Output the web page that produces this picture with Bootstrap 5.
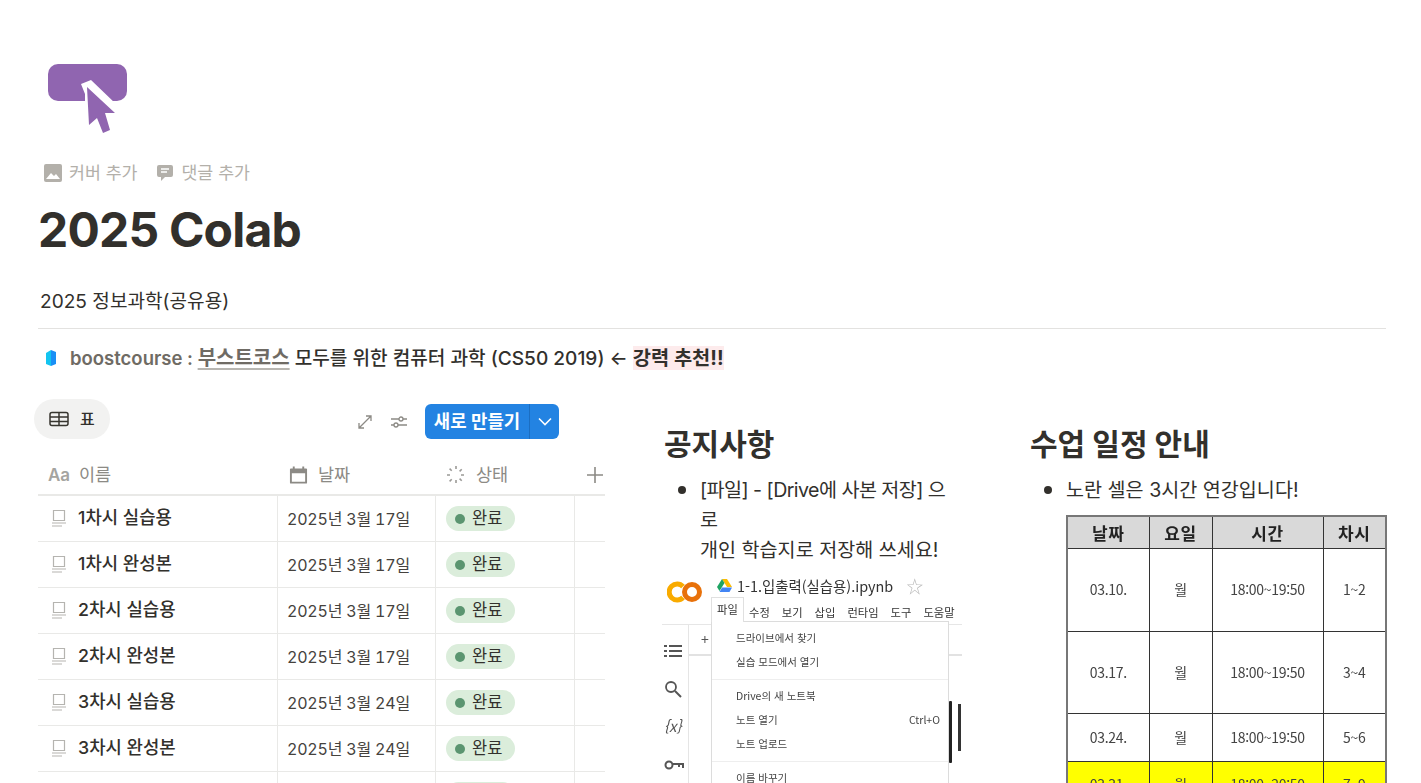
<!DOCTYPE html>
<html lang="ko">
  <head>
    <meta charset="UTF-8" />
    <meta name="viewport" content="width=device-width, initial-scale=1" />
    <title>2025 Colab</title>
    <link href="https://cdn.jsdelivr.net/npm/bootstrap@5.3.0/dist/css/bootstrap.min.css" rel="stylesheet" />
    <style>
      html, body { height: 783px; overflow: hidden; }
      body { font-family: Inter, "Noto Sans CJK KR", sans-serif; color: #32302c; background: #fff; font-size: 18px; }
      .page-wrap { padding: 64px 35px 0 38px; }
      .page-icon { display: block; margin-left: 10px; height: 69px; width: 80px; }
      .page-actions { margin-top: 28px; margin-left: 6px; height: 24px; color: #b3b0aa; font-size: 17.3px; gap: 19px; }
      .page-actions svg { margin-right: 7px; }
      .page-title { font-size: 48px; font-weight: 700; line-height: 58px; margin: 16px 0 0; color: #32302c; letter-spacing: -0.8px; }
      .page-sub { font-size: 19.1px; line-height: 28px; margin: 28px 0 0 2px; }
      .page-rule { border-top: 1px solid #e3e2e0; margin: 13px 0 0; }
      .link-line { font-size: 19.1px; font-weight: 500; line-height: 28px; margin-top: 15px; margin-left: 6px; height: 28px; white-space: nowrap; }
      .link-line svg { margin-right: 12px; }
      .link-src { color: #6f6b64; font-size: 18.5px; font-weight: 600; }
      .link-src u { font-size: 20px; text-decoration-color: #b8b6b1; text-underline-offset: 3px; }
      .hl-pink { background: #fdebec; font-size: 19.8px; font-weight: 700; }
      .cols { margin-top: 27px; }
      .db-col { width: 567px; flex: none; }
      .notice-col { width: 300px; margin-left: 59px; flex: none; }
      .plan-col { width: 357px; margin-left: 66px; flex: none; }
      .db-tab { margin-left: -4px; width: 76px; height: 40px; border-radius: 20px; background: #f2f2f1; font-size: 16px; font-weight: 500; gap: 11px; padding-left: 15px; }
      .db-tools { height: 40px; }
      .db-tools svg { margin-right: 17px; }
      .db-tools .db-tab svg, .new-btn svg { margin-right: 0; }
      .tool-set { margin-top: 5px; }
      .new-btn { width: 134px; height: 35px; background: #2383e2; border-radius: 6px; color: #fff; font-size: 17.8px; font-weight: 600; margin-right: 46px; }
      .new-main { width: 105px; text-align: center; line-height: 35px; border-right: 1px solid #1b6ec2; white-space: nowrap; }
      .new-caret { flex: 1; }
      .db-head { height: 40px; margin-top: 17px; color: #8c8a85; font-size: 17.5px; border-bottom: 2px solid #e9e9e7; }
      .db-row { height: 46px; border-bottom: 1px solid #e9e9e7; font-size: 16px; }
      .cell-name { width: 240px; flex: none; border-right: 1px solid #e9e9e7; padding-left: 13px; height: 100%; font-weight: 500; gap: 11px; font-size: 17.8px; }
      .cell-date { width: 158px; flex: none; border-right: 1px solid #e9e9e7; padding-left: 9px; height: 100%; color: #45423d; font-variant-numeric: tabular-nums; white-space: nowrap; letter-spacing: -0.2px; }
      .cell-status { width: 139px; flex: none; border-right: 1px solid #e9e9e7; padding-left: 10px; height: 100%; }
      .head-name { width: 240px; flex: none; padding-left: 10px; gap: 9px; }
      .head-date { width: 158px; flex: none; padding-left: 11px; gap: 10px; }
      .head-status { width: 139px; flex: none; padding-left: 10px; gap: 10px; }
      .head-add { margin-left: 11px; }
      .done-pill { height: 25px; width: 69px; border-radius: 13px; background: #dbeddb; color: #32302c; font-size: 16.5px; padding-left: 9px; gap: 7px; }
      .done-dot { width: 10px; height: 10px; border-radius: 50%; background: #5b9570; }
      .block-head { font-size: 30px; font-weight: 700; line-height: 40px; margin: 0; color: #32302c; padding-top: 25px; white-space: nowrap; }
      .bullet-list { font-size: 19.6px; line-height: 30px; margin: 10px 0 0; padding-left: 36px; color: #32302c; }
      .bullet-list li::marker { font-size: 24px; }
      .notice-list { width: 290px; }
      .notice-tight { letter-spacing: -0.55px; }
      .colab-shot { height: 240px; overflow: hidden; margin-top: 7px; position: relative; font-family: "Noto Sans CJK KR", sans-serif; width: 300px; margin-left: -2px; color: #444; filter: blur(0.4px); }
      .colab-top { height: 52px; padding-left: 5px; position: relative; }
      .colab-logo { margin-top: 9px; }
      .colab-title { margin-left: 14px; }
      .colab-file { font-size: 14.4px; color: #333; white-space: nowrap; padding-top: 1px; }
      .colab-file svg { margin-right: 5px; }
      .colab-star { color: #b9b9b9; margin-left: 13px; font-size: 17px; }
      .colab-menu { font-size: 11.3px; gap: 12px; padding-left: 32px; color: #333; margin-top: 5px; white-space: nowrap; }
      .colab-side { width: 27px; border-right: 1px solid #e5e5e5; padding-top: 13px; height: 190px; }
      .colab-side-item { height: 38px; width: 100%; padding-left: 2px; font-size: 15px; color: #555; }
      .colab-side-label { margin-top: 1px; }
      .colab-body { border-top: 1px solid #e6e6e6; height: 190px; }
      .colab-toolbar { height: 31px; border-bottom: 2px solid #e2e2e2; color: #555; font-size: 14px; padding-left: 12px; }
      .colab-drop { position: absolute; left: 49px; top: 49px; width: 238px; height: 200px; background: #fff; border: 1px solid #dcdcdc; font-size: 10.5px; color: #444; padding-top: 4px; }
      .colab-drop div.drop-row { padding-left: 24px; height: 24px; line-height: 24px; white-space: nowrap; }
      .drop-sep { border-top: 1px solid #eee; margin: 5px 0 4px; }
      .colab-tab { position: absolute; left: 49px; top: 25px; width: 33px; height: 25px; background: #fff; border: 1px solid #e0e0e0; border-bottom: 0; z-index: 2; font-size: 11.3px; color: #333; text-align: center; line-height: 23px; }
      .colab-bar-a { position: absolute; left: 287px; top: 129px; width: 3px; height: 62px; background: #222; border-radius: 1px; }
      .colab-bar-b { position: absolute; left: 296px; top: 132px; width: 3px; height: 47px; background: #333; }
      .sched-table { font-family: "Noto Sans CJK KR", sans-serif; width: 321px; margin: 10px 0 0 36px; border-collapse: collapse; table-layout: fixed; text-align: center; font-size: 14px; color: #444; border: 2px solid #777; filter: blur(0.4px); letter-spacing: -0.3px; }
      .sched-table th, .sched-table td { border: 1px solid #333; padding: 0; vertical-align: middle; }
      .sched-table th { background: #d9d9d9; font-size: 17px; line-height: 1; font-weight: 700; color: #222; height: 32px; letter-spacing: 0.5px; }
      .col-day { width: 82px; }
      .col-week { width: 63px; }
      .col-time { width: 111px; }
      .row-tall { height: 83px; }
      .row-mid { height: 82px; }
      .row-short { height: 48px; }
      .sched-yellow td { background: #ff0; }
    </style>
  </head>
  <body>
    <div class="page-wrap">
      <!-- page icon -->
      <svg class="page-icon" viewBox="0 0 80 69">
        <rect x="0" y="0" width="79" height="37" rx="10" fill="#9065b0" />
        <path d="M33 20 43 16 68 40 58 52H37V30z" fill="#fff" />
        <path d="M39 23 67 49 57 49 62 66 55 69 49 54 41 61z" fill="#9065b0" />
      </svg>
      <div class="page-actions d-flex align-items-center">
        <span class="d-flex align-items-center">
          <svg width="18" height="18" viewBox="0 0 18 18"><rect width="18" height="18" rx="2" fill="#b3b0aa" /><path d="M2 15 7 9l3 3 2-2 4 5z" fill="#fff" /></svg>커버 추가
        </span>
        <span class="d-flex align-items-center">
          <svg width="18" height="18" viewBox="0 0 18 18"><path d="M3 1h12a2 2 0 0 1 2 2v8a2 2 0 0 1-2 2H9l-4 4v-4H3a2 2 0 0 1-2-2V3a2 2 0 0 1 2-2z" fill="#b3b0aa" /><path d="M5 5h8M5 8h6" stroke="#fff" stroke-width="1.3" /></svg>댓글 추가
        </span>
      </div>
      <h1 class="page-title">2025 Colab</h1>
      <p class="page-sub">2025 정보과학(공유용)</p>
      <hr class="page-rule opacity-100" />
      <div class="link-line d-flex align-items-center">
        <svg width="14" height="18" viewBox="0 0 14 18"><path d="M2 4 7 1v16l-5-2z" fill="#12c4f0" /><path d="M7 1l5 2v12l-5 2z" fill="#1a8ff5" /></svg>
        <span><span class="link-src">boostcourse : <u>부스트코스</u></span> 모두를 위한 컴퓨터 과학 (CS50 2019) ← <span class="hl-pink">강력 추천!!</span></span>
      </div>

      <div class="cols d-flex">
        <!-- table view -->
        <div class="db-col">
          <div class="db-tools d-flex align-items-start">
            <div class="db-tab d-flex align-items-center">
              <svg width="20" height="16" viewBox="0 0 20 16"><rect x="1" y="1.5" width="18" height="13" rx="2" fill="none" stroke="#37352f" stroke-width="1.5" /><path d="M1 6h18M1 10.5h18M10 2v12" stroke="#37352f" stroke-width="1.5" /></svg>표
            </div>
            <div class="tool-set d-flex align-items-center ms-auto">
              <svg width="16" height="16" viewBox="0 0 16 16"><path d="M2 14 14 2M9 2h5v5M2 9v5h5" fill="none" stroke="#8c8a85" stroke-width="1.3" /></svg>
              <svg width="18" height="14" viewBox="0 0 18 14"><path d="M1 4h8M13 4h4M1 10h3M8 10h9" stroke="#8c8a85" stroke-width="1.3" /><circle cx="11" cy="4" r="2" fill="none" stroke="#8c8a85" stroke-width="1.3" /><circle cx="6" cy="10" r="2" fill="none" stroke="#8c8a85" stroke-width="1.3" /></svg>
              <div class="new-btn d-flex align-items-center">
                <div class="new-main">새로 만들기</div>
                <div class="new-caret d-flex justify-content-center"><svg width="14" height="9" viewBox="0 0 14 9"><path d="M1 1.5l6 6 6-6" fill="none" stroke="#fff" stroke-width="1.6" /></svg></div>
              </div>
            </div>
          </div>
          <div class="db-head d-flex align-items-center">
            <div class="head-name d-flex align-items-center">
              <svg width="22" height="18" viewBox="0 0 22 18"><text x="0" y="15" font-family="Inter" font-size="17" font-weight="600" fill="#a5a4a0">Aa</text></svg>이름
            </div>
            <div class="head-date d-flex align-items-center">
              <svg width="19" height="19" viewBox="0 0 20 19"><path d="M2 2h16a1 1 0 0 1 1 1v14a1 1 0 0 1-1 1H2a1 1 0 0 1-1-1V3a1 1 0 0 1 1-1zM3 7v9h14V7z" fill="#8c8a85" fill-rule="evenodd" /><path d="M5 0v3M15 0v3" stroke="#8c8a85" stroke-width="2" /></svg>날짜
            </div>
            <div class="head-status d-flex align-items-center">
              <svg width="20" height="20" viewBox="0 0 20 20"><path d="M10 1v4M10 15v4M1 10h4M15 10h4M3.6 3.6l2.8 2.8M13.6 13.6l2.8 2.8M3.6 16.4l2.8-2.8M13.6 6.4l2.8-2.8" stroke="#9b9a97" stroke-width="1.6" stroke-dasharray="3 1" /></svg>상태
            </div>
            <svg class="head-add" width="18" height="18" viewBox="0 0 18 18"><path d="M9 1v16M1 9h16" stroke="#8c8a85" stroke-width="1.6" /></svg>
          </div>
          <div id="db-rows"></div>
        </div>

        <!-- notice column -->
        <div class="notice-col">
          <h2 class="block-head">공지사항</h2>
          <ul class="bullet-list notice-list">
            <li><span class="notice-tight">[파일] - [Drive에 사본 저장] 으로</span><br />개인 학습지로 저장해 쓰세요!</li>
          </ul>
          <div class="colab-shot">
            <div class="colab-top d-flex">
              <svg class="colab-logo flex-shrink-0" width="36" height="22" viewBox="0 0 36 22"><path d="M16 5.5a8 8 0 1 0 0 11" fill="none" stroke="#f9ab00" stroke-width="5" /><circle cx="25" cy="11" r="7.5" fill="none" stroke="#e8710a" stroke-width="5" /></svg>
              <div class="colab-title">
                <div class="colab-file d-flex align-items-center">
                  <svg width="15" height="13" viewBox="0 0 15 13"><path d="M5 0h5l5 8h-5z" fill="#fbbc04" /><path d="M5 0 0 8l2.5 4L7.5 4z" fill="#1fa463" /><path d="M2.5 13h10L15 8.5H5z" fill="#4285f4" /></svg>1-1.입출력(실습용).ipynb<span class="colab-star">☆</span>
                </div>
                <div class="colab-menu d-flex">
                  <span>수정</span><span>보기</span><span>삽입</span><span>런타임</span><span>도구</span><span>도움말</span>
                </div>
              </div>
            </div>
            <div class="colab-tab">파일</div>
            <div class="colab-body d-flex">
              <div class="colab-side d-flex flex-column flex-shrink-0">
                <div class="colab-side-item"><svg width="18" height="14" viewBox="0 0 18 14"><path d="M5 2h13M5 7h13M5 12h13M0 2h3M0 7h3M0 12h3" stroke="#555" stroke-width="1.8" /></svg></div>
                <div class="colab-side-item"><svg width="18" height="18" viewBox="0 0 18 18"><circle cx="7" cy="7" r="5" fill="none" stroke="#555" stroke-width="1.8" /><path d="M11 11l6 6" stroke="#555" stroke-width="2" /></svg></div>
                <div class="colab-side-item fst-italic"><div class="colab-side-label">{x}</div></div>
                <div class="colab-side-item"><svg width="20" height="10" viewBox="0 0 20 10"><circle cx="5" cy="5" r="3.5" fill="none" stroke="#555" stroke-width="2" /><path d="M9 4h10v4M15 4v3" fill="none" stroke="#555" stroke-width="2" /></svg></div>
              </div>
              <div class="flex-grow-1">
                <div class="colab-toolbar d-flex align-items-center">+</div>
              </div>
            </div>
            <div class="colab-drop">
              <div class="drop-row">드라이브에서 찾기</div>
              <div class="drop-row">실습 모드에서 열기</div>
              <div class="drop-sep"></div>
              <div class="drop-row">Drive의 새 노트북</div>
              <div class="drop-row d-flex justify-content-between pe-2"><span>노트 열기</span><span>Ctrl+O</span></div>
              <div class="drop-row">노트 업로드</div>
              <div class="drop-sep"></div>
              <div class="drop-row">이름 바꾸기</div>
            </div>
            <div class="colab-bar-a"></div>
            <div class="colab-bar-b"></div>
          </div>
        </div>

        <!-- schedule column -->
        <div class="plan-col">
          <h2 class="block-head">수업 일정 안내</h2>
          <ul class="bullet-list">
            <li>노란 셀은 3시간 연강입니다!</li>
          </ul>
          <table class="sched-table">
            <colgroup><col class="col-day" /><col class="col-week" /><col class="col-time" /><col /></colgroup>
            <tr><th>날짜</th><th>요일</th><th>시간</th><th>차시</th></tr>
            <tr class="row-tall"><td>03.10.</td><td>월</td><td>18:00~19:50</td><td>1~2</td></tr>
            <tr class="row-mid"><td>03.17.</td><td>월</td><td>18:00~19:50</td><td>3~4</td></tr>
            <tr class="row-short"><td>03.24.</td><td>월</td><td>18:00~19:50</td><td>5~6</td></tr>
            <tr class="row-short sched-yellow"><td>03.31.</td><td>월</td><td>18:00~20:50</td><td>7~9</td></tr>
          </table>
        </div>
      </div>
    </div>
    <script src="https://cdn.jsdelivr.net/npm/bootstrap@5.3.0/dist/js/bootstrap.bundle.min.js"></script>
    <script>
      const rows = [
        ["1차시 실습용", "2025년 3월 17일", "완료"],
        ["1차시 완성본", "2025년 3월 17일", "완료"],
        ["2차시 실습용", "2025년 3월 17일", "완료"],
        ["2차시 완성본", "2025년 3월 17일", "완료"],
        ["3차시 실습용", "2025년 3월 24일", "완료"],
        ["3차시 완성본", "2025년 3월 24일", "완료"],
        ["", "", ""], // only the top of this row's pill shows above the fold
      ];
      const docIcon = '<svg width="16" height="19" viewBox="0 0 16 19"><path d="M2.5 1.5h11v10h-11z" fill="none" stroke="#b5b4b0" stroke-width="1.2"/><path d="M1 14h14M1 17h10" stroke="#b5b4b0" stroke-width="1.2"/></svg>';
      document.getElementById("db-rows").innerHTML = rows.map(([name, date, status]) => `
        <div class="db-row d-flex align-items-center">
          <div class="cell-name d-flex align-items-center">${docIcon}<span>${name}</span></div>
          <div class="cell-date d-flex align-items-center">${date}</div>
          <div class="cell-status d-flex align-items-center">
            <div class="done-pill d-flex align-items-center"><span class="done-dot"></span>${status}</div>
          </div>
        </div>`).join("");
    </script>
  </body>
</html>
